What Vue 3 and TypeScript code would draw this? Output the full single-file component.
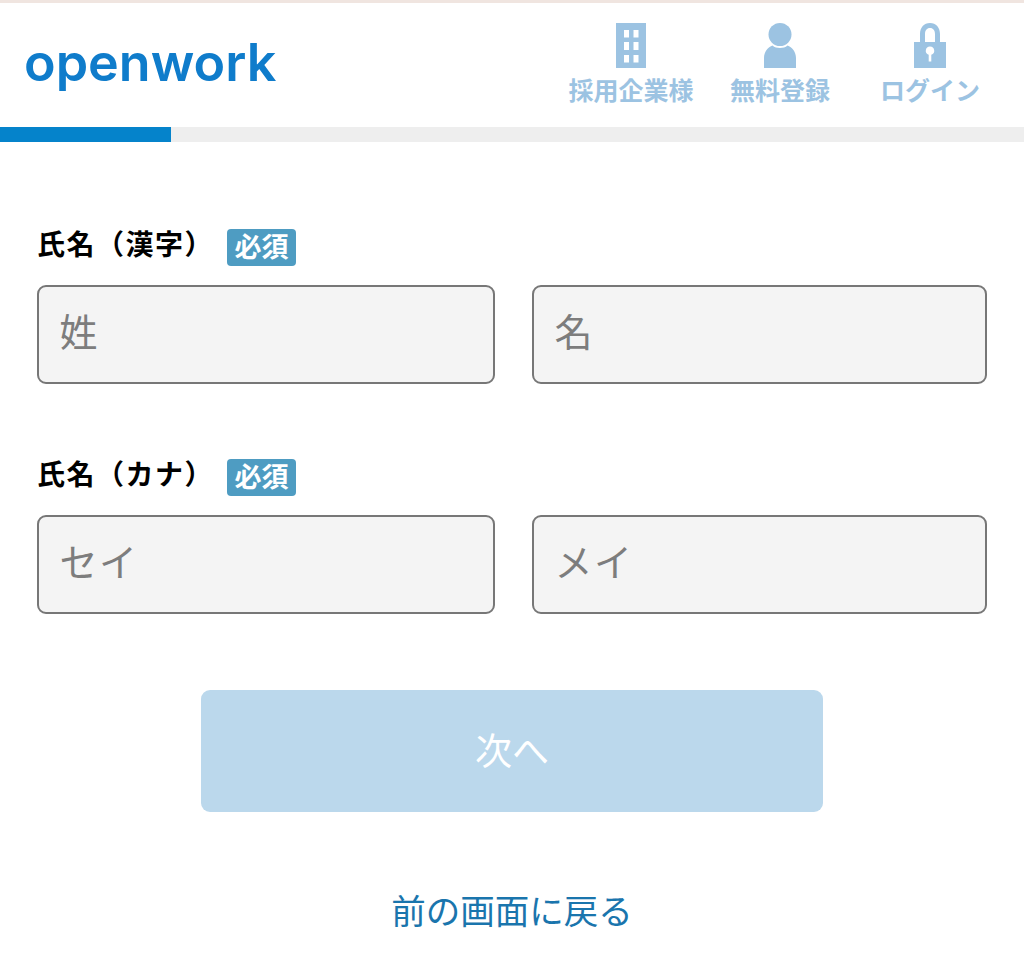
<template>
  <div class="page">
    <div class="top-strip"></div>
    <header class="header">
      <div class="logo">openwork</div>
      <nav class="nav">
        <a v-for="item in navItems" :key="item.label" class="nav-item" :class="item.cls">
          <svg v-if="item.icon === 'building'" class="icon" width="32" height="45" viewBox="0 0 32 45">
            <path fill="#9cc3e2" fill-rule="evenodd" d="M1 0h30v45H1zM9 7v7.500h5V7zM18.500 7v7.500h5V7zM9 19v8h5v-8zM18.500 19v8h5v-8zM9 32v7.500h5V32zM18.500 32v7.500h5V32z" />
          </svg>
          <svg v-else-if="item.icon === 'person'" class="icon" width="34" height="45" viewBox="0 0 34 45">
            <circle cx="17" cy="11.500" r="11.500" fill="#9cc3e2" />
            <path fill="#9cc3e2" d="M1 45V35C1 29 5 24 9.500 22.500c2 1.800 4.500 2.500 7.500 2.500s5.500-.7 7.500-2.500C29 24 33 29 33 35v10z" />
          </svg>
          <svg v-else class="icon" width="34" height="45" viewBox="0 0 34 45">
            <path fill="#9cc3e2" fill-rule="evenodd" d="M7 19V11C7 4.500 11 0 17 0s10 4.500 10 11v8h6v26H1V19zM12 19h10V11c0-3.500-1.800-6-5-6s-5 2.500-5 6zM17 23.500a4.200 4.200 0 0 0-1.300 8.200V38.500h2.600V31.700A4.200 4.200 0 0 0 17 23.500z" />
          </svg>
          <span class="nav-label">{{ item.label }}</span>
        </a>
      </nav>
    </header>
    <div class="progress"><div class="progress-fill" :style="{ width: progress + 'px' }"></div></div>

    <main class="form">
      <section v-for="group in groups" :key="group.label" class="field-group">
        <div class="label-row">
          <label class="label">{{ group.label }}</label>
          <span class="required">必須</span>
        </div>
        <div class="inputs">
          <input v-for="ph in group.placeholders" :key="ph" class="input" type="text" :placeholder="ph" />
        </div>
      </section>
      <button class="next" type="button" disabled>次へ</button>
      <a class="back">前の画面に戻る</a>
    </main>
  </div>
</template>

<script setup lang="ts">
const progress = 171

const navItems = [
  { label: '採用企業様', icon: 'building', cls: 'nav-company' },
  { label: '無料登録', icon: 'person', cls: 'nav-signup' },
  { label: 'ログイン', icon: 'lock', cls: 'nav-login' },
]

const groups = [
  { label: '氏名（漢字）', placeholders: ['姓', '名'] },
  { label: '氏名（カナ）', placeholders: ['セイ', 'メイ'] },
]
</script>

<style>
html, body {
  margin: 0;
  background: #fff;
}
</style>

<style scoped>
.page {
  width: 1024px;
  height: 955px;
  overflow: hidden;
  font-family: "Noto Sans CJK JP", sans-serif;
  color: #000;
}

.top-strip {
  height: 3px;
  background: #f0e5e0;
}

.header {
  height: 124px;
  display: flex;
  justify-content: space-between;
  box-sizing: border-box;
  padding-left: 24px;
}

.logo {
  font-family: Inter, sans-serif;
  font-weight: 600;
  font-size: 52px;
  line-height: 60px;
  margin-top: 30px;
  color: #0f7ccb;
}

.nav {
  display: flex;
  padding-right: 44px;
}

.nav-item {
  display: flex;
  flex-direction: column;
  align-items: center;
  padding-top: 20px;
  color: #9cc3e2;
}

.nav-company { width: 124px; margin-right: 37px; }
.nav-signup { width: 100px; margin-right: 50px; }
.nav-login { width: 100px; }

.icon {
  display: block;
}

.nav-label {
  font-size: 25px;
  font-weight: 700;
  line-height: 30px;
  margin-top: 6px;
  white-space: nowrap;
}

.progress {
  height: 15px;
  background: #eeeeee;
}

.progress-fill {
  height: 100%;
  background: #0583cb;
}

.form {
  padding: 87px 37px 0 37px;
  display: flex;
  flex-direction: column;
}

.field-group {
  margin-bottom: 75px;
}

.label-row {
  display: flex;
  align-items: flex-start;
  height: 38px;
  margin-bottom: 18px;
}

.label {
  font-size: 28px;
  font-weight: 700;
  letter-spacing: 1.500px;
  text-spacing-trim: space-all;
  width: 190px;
  line-height: 29px;
  white-space: nowrap;
}

.required {
  width: 69px;
  height: 37px;
  line-height: 33px;
  border-radius: 4px;
  background: #4e9cc2;
  color: #fff;
  font-size: 27px;
  font-weight: 700;
  text-align: center;
}

.inputs {
  display: grid;
  grid-template-columns: 458px 455px;
  gap: 37px;
}

.input {
  width: 100%;
  height: 99px;
  box-sizing: border-box;
  border: 2px solid #777;
  border-radius: 9px;
  background: #f4f4f4;
  padding: 0 20.500px 10px;
  font-family: inherit;
  font-size: 38px;
  letter-spacing: 1.500px;
  outline: none;
}

.input::placeholder {
  color: #7d7d7d;
  opacity: 1;
}

.next {
  align-self: center;
  width: 622px;
  height: 122px;
  margin-top: 1px;
  border: none;
  border-radius: 9px;
  background: #bbd8ec;
  color: #fff;
  font-family: inherit;
  font-size: 37px;
  padding: 0 0 5px;
}

.back {
  align-self: center;
  margin-top: 72px;
  font-size: 34.500px;
  line-height: 50px;
  color: #1a75ad;
}
</style>
